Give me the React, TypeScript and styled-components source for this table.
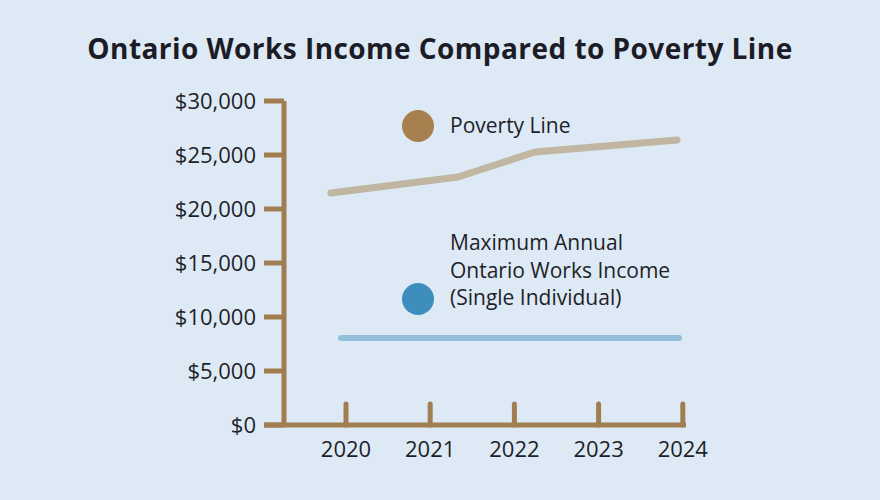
import React from 'react';
import styled, { createGlobalStyle } from 'styled-components';

const GlobalStyle = createGlobalStyle`
  html, body {
    margin: 0;
    padding: 0;
    background: #dde9f4;
  }
  body {
    font-family: 'Open Sans', 'Noto Sans', sans-serif;
    color: #1e1f29;
  }
`;

const Page = styled.div`
  width: 880px;
  height: 500px;
  display: flex;
  flex-direction: column;
  align-items: center;
  background: #dde9f4;
  overflow: hidden;
`;

const Title = styled.h1`
  margin: 33px 0 0;
  font-size: 28px;
  line-height: 30px;
  font-weight: 700;
  letter-spacing: 0.45px;
  color: #1c1c26;
`;

const ChartArea = styled.div`
  position: relative;
  width: 880px;
  height: 430px;
  margin-top: 7px;
`;

const ChartSvg = styled.svg`
  display: block;
  overflow: visible;
`;

const AxisLabel = styled.text`
  font-family: 'Open Sans', 'Noto Sans', sans-serif;
  font-size: 22px;
  fill: #1e1f29;
`;

const Legend = styled.div<{ $top: number }>`
  position: absolute;
  left: 402px;
  top: ${(p) => p.$top}px;
  display: flex;
  align-items: flex-end;
  gap: 16px;
`;

const Dot = styled.span<{ $color: string }>`
  flex: none;
  width: 32px;
  height: 32px;
  border-radius: 50%;
  background: ${(p) => p.$color};
  margin-bottom: -3px;
`;

const LegendText = styled.div`
  font-size: 21px;
  line-height: 27.5px;
  color: #1e1f29;
`;

const OFFSET = 70;
const AXIS = '#a07e52';

const yTicks = [30000, 25000, 20000, 15000, 10000, 5000, 0];
const years = [2020, 2021, 2022, 2023, 2024];

const yPos = (v: number) => 425 - (v / 5000) * 54 - OFFSET;
const xPos = (i: number) => 346 + i * 84.2;

const poverty = [
  [331, 193],
  [458, 177],
  [535, 152],
  [677, 140],
];

const Chart: React.FC = () => (
  <ChartSvg width={880} height={430} viewBox="0 0 880 430">
    {/* poverty line */}
    <polyline
      points={poverty.map(([x, y]) => `${x},${y - OFFSET}`).join(' ')}
      fill="none"
      stroke="#c0b6a2"
      strokeWidth={7}
      strokeLinecap="round"
      strokeLinejoin="round"
    />
    {/* ontario works income */}
    <line
      x1={341}
      x2={679}
      y1={338 - OFFSET}
      y2={338 - OFFSET}
      stroke="#93bfda"
      strokeWidth={6}
      strokeLinecap="round"
    />
    {/* axes */}
    <line x1={284} x2={284} y1={101 - OFFSET} y2={427 - OFFSET} stroke={AXIS} strokeWidth={5} />
    <line x1={264} x2={686} y1={425 - OFFSET} y2={425 - OFFSET} stroke={AXIS} strokeWidth={5} />
    {yTicks.map((v) => (
      <g key={v}>
        <line x1={264} x2={284} y1={yPos(v)} y2={yPos(v)} stroke={AXIS} strokeWidth={5} />
        <AxisLabel x={256} y={yPos(v) + 8} textAnchor="end">
          ${v.toLocaleString('en-US')}
        </AxisLabel>
      </g>
    ))}
    {years.map((yr, i) => (
      <g key={yr}>
        <line
          x1={xPos(i)}
          x2={xPos(i)}
          y1={404 - OFFSET}
          y2={425 - OFFSET}
          stroke={AXIS}
          strokeWidth={5}
          strokeLinecap="round"
        />
        <AxisLabel x={xPos(i)} y={457 - OFFSET} textAnchor="middle">
          {yr}
        </AxisLabel>
      </g>
    ))}
  </ChartSvg>
);

export default function App() {
  return (
    <>
      <GlobalStyle />
      <Page>
        <Title>Ontario Works Income Compared to Poverty Line</Title>
        <ChartArea>
          <Chart />
          <Legend $top={110 - OFFSET}>
            <Dot $color="#a8804f" />
            <LegendText>Poverty Line</LegendText>
          </Legend>
          <Legend $top={229 - OFFSET}>
            <Dot $color="#3d8dbd" />
            <LegendText>
              Maximum Annual
              <br />
              Ontario Works Income
              <br />
              (Single Individual)
            </LegendText>
          </Legend>
        </ChartArea>
      </Page>
    </>
  );
}
